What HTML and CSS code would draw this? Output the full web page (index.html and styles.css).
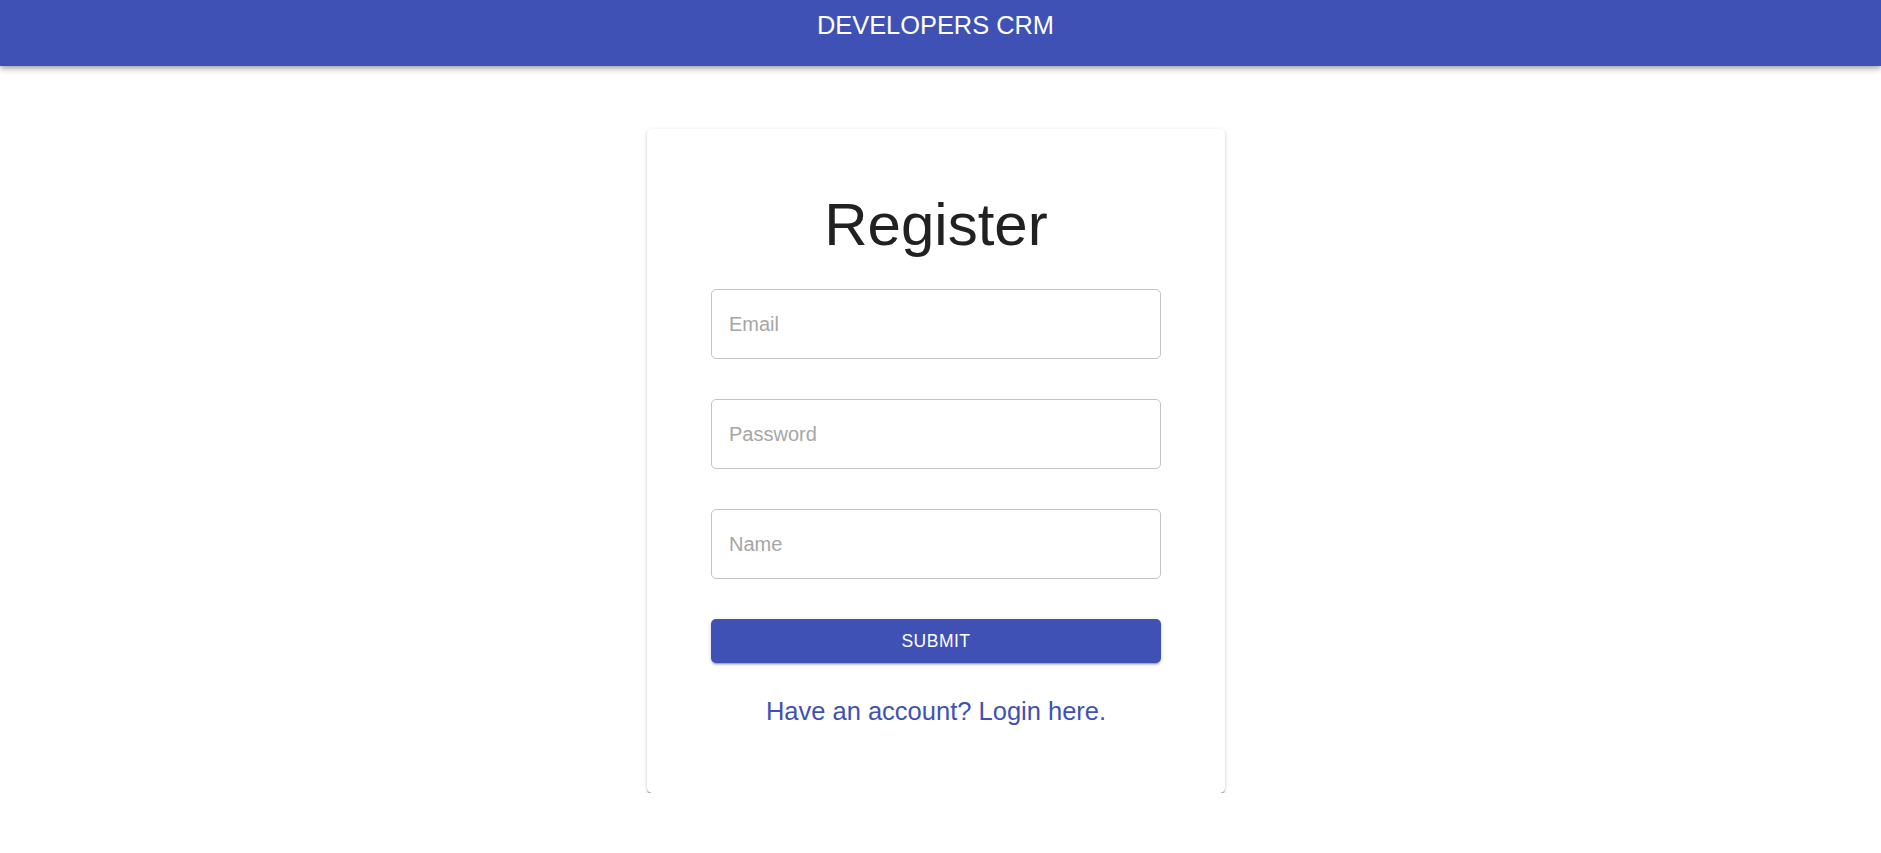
FILE: index.html
```html
<!DOCTYPE html>
<html lang="en">
<head>
<meta charset="utf-8">
<title>Developers CRM</title>
<link rel="stylesheet" href="styles.css">
</head>
<body>
<header class="appbar">
  <div class="appbar-title">DEVELOPERS CRM</div>
</header>
<main class="page">
  <section class="card">
    <h1 class="card-title">Register</h1>
    <form class="form">
      <input class="field" type="email" placeholder="Email">
      <input class="field" type="password" placeholder="Password">
      <input class="field" type="text" placeholder="Name">
      <button class="submit" type="button">SUBMIT</button>
    </form>
    <a class="login-link" href="#">Have an account? Login here.</a>
  </section>
</main>
</body>
</html>
```

FILE: styles.css
```css
* { box-sizing: border-box; }

html, body {
  margin: 0;
  padding: 0;
  background: #ffffff;
  font-family: "Liberation Sans", Arial, sans-serif;
}

.appbar {
  height: 66px;
  background: #3f51b5;
  color: #ffffff;
  box-shadow: 0 2px 4px -1px rgba(0,0,0,0.2), 0 4px 5px 0 rgba(0,0,0,0.14), 0 1px 10px 0 rgba(0,0,0,0.12);
  display: flex;
  justify-content: center;
  padding-top: 11px;
  padding-right: 10px;
  position: relative;
  z-index: 1;
}

.appbar-title {
  font-size: 25.4px;
  line-height: 29px;
  font-weight: 400;
}

.page {
  display: flex;
  justify-content: center;
  padding-top: 63px;
  padding-right: 9px;
}

.card {
  width: 578px;
  background: #ffffff;
  border-radius: 5px;
  padding: 64px 64px 67px;
  box-shadow: 0 2px 2px -1px rgba(0,0,0,0.4), 0 1px 1px 0 rgba(0,0,0,0.16), 0 1px 4px 0 rgba(0,0,0,0.14);
  display: flex;
  flex-direction: column;
  align-items: center;
}

.card-title {
  margin: 0 0 32px;
  font-size: 60px;
  line-height: 64px;
  font-weight: 400;
  color: #212121;
}

.form {
  width: 100%;
  display: flex;
  flex-direction: column;
  gap: 40px;
}

.field {
  width: 100%;
  height: 70px;
  border: 1px solid #c4c4c4;
  border-radius: 5px;
  padding: 0 17px;
  font-family: inherit;
  font-size: 20px;
  color: #212121;
  background: #ffffff;
  outline: none;
}

.field::placeholder {
  color: #a6a6a6;
  opacity: 1;
}

.submit {
  width: 100%;
  height: 44px;
  border: none;
  border-radius: 5px;
  background: #3f51b5;
  color: #ffffff;
  font-family: inherit;
  font-size: 17.5px;
  letter-spacing: 0.5px;
  box-shadow: 0 3px 1px -2px rgba(0,0,0,0.2), 0 2px 2px 0 rgba(0,0,0,0.14), 0 1px 5px 0 rgba(0,0,0,0.12);
  cursor: pointer;
}

.login-link {
  margin-top: 34px;
  font-size: 25.5px;
  line-height: 29px;
  color: #3f51b5;
  text-decoration: none;
}
```
